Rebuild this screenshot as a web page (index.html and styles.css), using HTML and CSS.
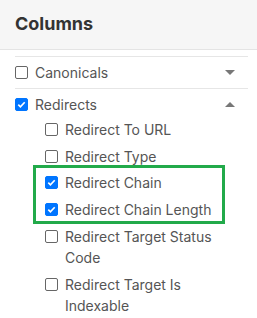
FILE: index.html
```html
<!DOCTYPE html>
<html>
<head>
	<meta charset="utf-8">
	<meta name="viewport" content="width=device-width, initial-scale=1">
	<title>Columns</title>
	<link rel="stylesheet" href="styles.css">
</head>
<body>

<div class="panel">
    <div class="panel-header">
        <h2>Columns</h2>
    </div>

    <div class="panel-body">
        <!-- column groups -->
        <div class="group">
            <div class="group-row">
                <label class="check"><input type="checkbox"><span>Canonicals</span></label>
                <span class="caret down"></span>
            </div>
        </div>

        <div class="group">
            <div class="group-row">
                <label class="check"><input type="checkbox" checked><span>Redirects</span></label>
                <span class="caret up"></span>
            </div>
            <div class="sub-list">
                <label class="check"><input type="checkbox"><span>Redirect To URL</span></label>
                <label class="check"><input type="checkbox"><span>Redirect Type</span></label>
                <div class="highlight">
                    <label class="check"><input type="checkbox" checked><span>Redirect Chain</span></label>
                    <label class="check"><input type="checkbox" checked><span>Redirect Chain Length</span></label>
                </div>
                <label class="check"><input type="checkbox"><span>Redirect Target Status Code</span></label>
                <label class="check"><input type="checkbox"><span>Redirect Target Is Indexable</span></label>
            </div>
        </div>
    </div>
</div>

</body>
</html>
```

FILE: styles.css
```css
body {
    font-family: Inter, "Noto Sans", sans-serif;
    background-color: #fff;
    margin: 0;
    padding: 0;
}

.panel {
    width: 257px;
}

.panel-header {
    height: 50px;
    box-sizing: border-box;
    background-color: #f6f6f6;
    border-bottom: 1px solid #e4e4e4;
    padding: 0 15px 3px;
    display: flex;
    align-items: center;
}

.panel-header h2 {
    margin: 0;
    font-size: 18px;
    font-weight: 700;
    color: #333;
}

.panel-body {
    padding: 6px 9px 0 15px;
}

.group {
    border-top: 1px solid #e6e6e6;
}

.group-row {
    height: 31px;
    display: flex;
    align-items: center;
    justify-content: space-between;
}

.check {
    display: flex;
    align-items: flex-start;
    gap: 7px;
    font-size: 14px;
    line-height: 21px;
    color: #555;
}

.check input {
    appearance: none;
    width: 13px;
    height: 13px;
    margin: 4px 0 0;
    border: 1px solid #666;
    border-radius: 2px;
    flex-shrink: 0;
    background-color: #fff;
}

.check input:checked {
    background-color: #0075ff;
    border-color: #0075ff;
    background-image: url("data:image/svg+xml,%3Csvg xmlns='http://www.w3.org/2000/svg' viewBox='0 0 12 12'%3E%3Cpath d='M2.5 6.2l2.3 2.3 4.7-5' fill='none' stroke='%23fff' stroke-width='1.8'/%3E%3C/svg%3E");
}

.caret {
    width: 0;
    height: 0;
    margin-right: 13px;
    border-left: 5px solid transparent;
    border-right: 5px solid transparent;
}

.caret.down {
    border-top: 5px solid #777;
}

.caret.up {
    border-bottom: 5px solid #777;
}

.sub-list {
    display: flex;
    flex-direction: column;
    gap: 6px;
    margin-top: -1px;
    padding: 0 0 0 30px;
}

/* green frame round the two picked columns, drawn without moving the rows */
.highlight {
    display: flex;
    flex-direction: column;
    gap: 6px;
    margin: -8px 23px -4px -12px;
    padding: 4px 0 1px 9px;
    border: 3px solid #22aa4a;
}
```
